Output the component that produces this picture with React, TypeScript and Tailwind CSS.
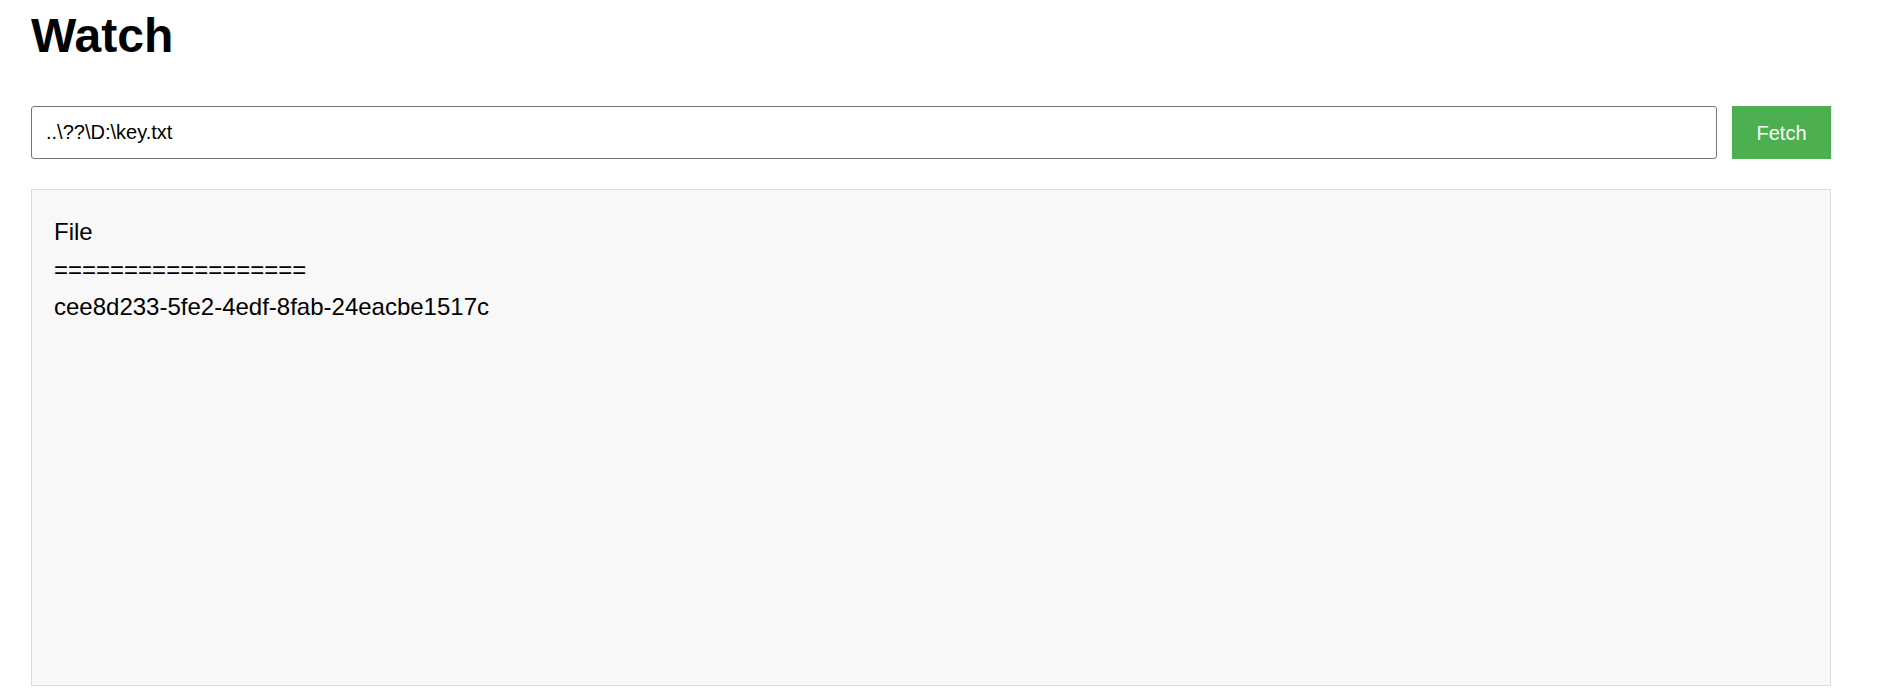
import React from "react";

const App = () => {
  return (
    <div className="min-h-screen bg-white font-['Liberation_Sans',Arial,sans-serif] text-black">
      <div className="ml-[31px] w-[1800px]">
        <h1 className="pt-[8px] text-[48px] font-bold leading-[56px]">Watch</h1>

        <div className="mt-[42px] flex h-[53px] gap-[15px]">
          <input
            type="text"
            defaultValue="..\??\D:\key.txt"
            className="h-full flex-1 rounded-[3px] border border-[#767676] bg-white px-[14px] text-[20px] outline-none"
          />
          <button className="h-full w-[99px] bg-[#4caf50] text-[20px] text-white">
            Fetch
          </button>
        </div>

        <div className="mt-[30px] h-[497px] border border-[#dddddd] bg-[#f8f8f8] pl-[22px] pt-[23px] text-[24px] leading-[37.5px]">
          <div>File</div>
          <div>==================</div>
          <div>cee8d233-5fe2-4edf-8fab-24eacbe1517c</div>
        </div>
      </div>
    </div>
  );
};

export default App;
